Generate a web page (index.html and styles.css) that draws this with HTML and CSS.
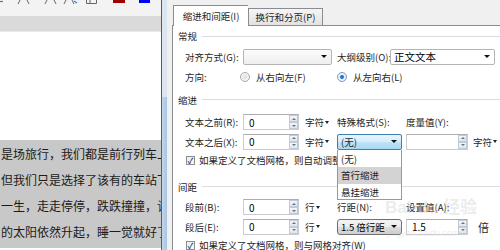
FILE: index.html
```html
<!DOCTYPE html>
<html lang="zh-CN">
<head>
    <meta charset="UTF-8">
    <title>段落 - 缩进和间距</title>
    <link rel="stylesheet" href="styles.css">
</head>
<body>
<div class="app">

    <div class="word">
        <div class="toolbar">
            <svg width="161" height="16" viewBox="0 0 161 16">
                <path d="M0 1.5h3" stroke="#3a7bd5" stroke-width="1.2"/>
                <path d="M20 0l-2 4M27 0l2 4" stroke="#666" stroke-width="1"/>
                <path d="M47 0l-2 4M54 0l2 4" stroke="#666" stroke-width="1"/>
                <path d="M66 0l-2 4M72 0l2 4" stroke="#666" stroke-width="1"/>
                <path d="M74 1l3 2" stroke="#3a7bd5" stroke-width="1.2"/>
                <path d="M86.5 0v3.5h10v-3.5M90 0v3.5" stroke="#666" stroke-width="1" fill="none"/>
                <rect x="113" y="0" width="12" height="3" fill="#a00000"/>
                <rect x="139" y="0" width="11" height="3" fill="#0000ff"/>
            </svg>
        </div>
        <div class="ruler"></div>
        <div class="doc">
            <div class="selection">
                <p>是场旅行，我们都是前行列车上</p>
                <p>但我们只是选择了该有的车站下</p>
                <p>一生，走走停停，跌跌撞撞，让</p>
                <p>的太阳依然升起，睡一觉就好了</p>
            </div>
        </div>
    </div>

    <div class="vscroll"><div class="thumb"></div></div>

    <div class="dialog">
        <div class="tabs">
            <div class="tab active">缩进和间距(I)</div>
            <div class="tab">换行和分页(P)</div>
        </div>

        <div class="page">
            <div class="group group-first"><span>常规</span></div>

            <div class="row row-21">
                <label class="lbl">对齐方式(G):</label>
                <div class="combo combo-align"><span></span><i class="arrow"></i></div>
                <label class="lbl lbl-outline">大纲级别(O):</label>
                <div class="combo combo-outline"><span>正文文本</span><i class="arrow"></i></div>
            </div>

            <div class="row">
                <label class="lbl">方向:</label>
                <div class="opt opt-first"><span class="radio"></span>从右向左(F)</div>
                <div class="opt"><span class="radio checked"></span>从左向右(L)</div>
            </div>

            <div class="group group-mid"><span>缩进</span></div>

            <div class="row">
                <label class="lbl">文本之前(R):</label>
                <div class="spin"><span>0</span><div class="spin-btns"><b class="up"></b><b class="down"></b></div></div>
                <div class="unit">字符<i class="caret"></i></div>
                <label class="lbl-col">特殊格式(S):</label>
                <label class="lbl-col">度量值(Y):</label>
            </div>

            <div class="row row-19">
                <label class="lbl">文本之后(X):</label>
                <div class="spin"><span>0</span><div class="spin-btns"><b class="up"></b><b class="down"></b></div></div>
                <div class="unit">字符<i class="caret"></i></div>
                <div class="combo combo-special open">
                    <span>(无)</span><i class="arrow"></i>
                    <ul class="dropdown">
                        <li>(无)</li>
                        <li class="hover">首行缩进</li>
                        <li>悬挂缩进</li>
                    </ul>
                </div>
                <div class="spin spin-wide"><span></span><div class="spin-btns"><b class="up"></b><b class="down"></b></div></div>
                <div class="unit unit-right">字符<i class="caret"></i></div>
            </div>

            <div class="row row-18">
                <div class="check"><span class="box">✓</span>如果定义了文档网格，则自动调整右缩进(D)</div>
            </div>

            <div class="group group-spacing"><span>间距</span></div>

            <div class="row">
                <label class="lbl">段前(B):</label>
                <div class="spin"><span>0</span><div class="spin-btns"><b class="up"></b><b class="down"></b></div></div>
                <div class="unit">行<i class="caret"></i></div>
                <label class="lbl-col">行距(N):</label>
                <label class="lbl-col">设置值(A):</label>
            </div>

            <div class="row row-19">
                <label class="lbl">段后(E):</label>
                <div class="spin"><span>0</span><div class="spin-btns"><b class="up"></b><b class="down"></b></div></div>
                <div class="unit">行<i class="caret"></i></div>
                <div class="combo combo-button"><span>1.5 倍行距</span><i class="arrow"></i></div>
                <div class="spin spin-wide"><span>1.5</span><div class="spin-btns"><b class="up"></b><b class="down"></b></div></div>
                <div class="unit unit-times">倍</div>
            </div>

            <div class="row row-18">
                <div class="check"><span class="box">✓</span>如果定义了文档网格，则与网格对齐(W)</div>
            </div>
        </div>

        <div class="watermark">
            <div class="wm-logo">Bai<span class="wm-paw">●</span>du 经验</div>
            <div class="wm-url">jingyan.baidu.com</div>
        </div>
    </div>

</div>
</body>
</html>
```

FILE: styles.css
```css
body {
    margin: 0;
    padding: 0;
    font-family: "Noto Sans CJK SC", "Liberation Sans", sans-serif;
    color: #1e1e1e;
    background: #fff;
}
.app {
    display: flex;
    width: 500px;
    height: 250px;
    overflow: hidden;
}

/* word document on the left */
.word {
    width: 161px;
    flex: none;
    overflow: hidden;
    background: #fff;
}
.toolbar {
    height: 16px;
    background: #f3f3f3;
}
.toolbar svg { display: block; }
.ruler {
    height: 15px;
    background: #dadada;
    border-bottom: 1px solid #e9e9e9;
}
.doc {
    height: 218px;
    padding-top: 108px;
    box-sizing: border-box;
}
.selection {
    height: 108px;
    background: #c8c8c8;
    padding-top: 1px;
    box-sizing: border-box;
    white-space: nowrap;
}
.selection p {
    margin: 0;
    padding-left: 1px;
    font-size: 12px;
    line-height: 26px;
    color: #1a1a1a;
}

.vscroll {
    width: 5px;
    flex: none;
    border-left: 1px solid #5c5c5c;
    background: #dde6ef;
    display: flex;
    flex-direction: column;
}
.thumb {
    margin-top: 97px;
    flex: 1;
    background: linear-gradient(90deg, #c3d6ec, #a9c4e4);
}

/* paragraph dialog */
.dialog {
    flex: 1;
    position: relative;
    background: #f0f0f0;
    overflow: hidden;
    font-size: 9.5px;
    white-space: nowrap;
}
.tabs {
    height: 25px;
    padding: 5px 0 0 6px;
    box-sizing: border-box;
    display: flex;
    align-items: flex-end;
}
.tab {
    width: 75px;
    height: 17px;
    box-sizing: border-box;
    border: 1px solid #898c95;
    border-bottom: none;
    background: linear-gradient(#f5f5f5, #e2e2e2);
    text-align: center;
    line-height: 16px;
    color: #1e1e1e;
}
.tab.active {
    width: 75px;
    height: 21px;
    margin-bottom: -1px;
    background: #fff;
    position: relative;
    z-index: 1;
    line-height: 20px;
    border-right: none;
}
.page {
    margin-left: 5px;
    width: 340px;
    height: 230px;
    border: 1px solid #898c95;
    background: #fff;
}

.group {
    display: flex;
    align-items: center;
    padding-left: 5px;
    padding-right: 4px;
}
.group::after {
    content: "";
    flex: 1;
    margin-left: 5px;
    border-top: 1px solid #d9dde2;
    margin-right: 8px;
}
.group-first { height: 20px; }
.group-mid { height: 25px; }
.group-spacing {
    height: 28px;
    align-items: flex-end;
}
.group-spacing span { line-height: 20px; }
.group-spacing::after { margin-bottom: 10px; }

.row {
    display: flex;
    align-items: center;
    height: 20px;
    padding-left: 12px;
}
.row-21 { height: 21px; }
.row-19 { height: 19px; }
.row-18 { height: 18px; }

.lbl {
    width: 58px;
    flex: none;
}
.lbl-outline { width: 53px; flex: none; }
.lbl-col {
    width: 69px;
    flex: none;
}

/* combo boxes */
.combo {
    height: 16px;
    box-sizing: border-box;
    border: 1px solid #b4b4b4;
    border-radius: 2px;
    background: #fff;
    display: flex;
    align-items: center;
    padding: 0 4px 0 3px;
    position: relative;
    flex: none;
}
.combo span {
    flex: 1;
    white-space: nowrap;
}
.arrow {
    width: 0;
    height: 0;
    border-left: 3px solid transparent;
    border-right: 3px solid transparent;
    border-top: 3px solid #111;
}
.combo-align {
    width: 89px;
    margin-right: 5px;
    background: linear-gradient(#fbfbfb, #efefef);
}
.combo-outline { width: 105px; }
.combo-outline span { font-size: 10.5px; color: #000; }
.combo-special {
    width: 65px;
    margin-right: 4px;
    border-color: #3c7fb1;
    background: linear-gradient(#e8f4fc 0%, #d6ecf9 50%, #bee3f7 51%, #a7d9f5 100%);
}
.combo-button {
    width: 65px;
    margin-right: 4px;
    border-color: #707070;
    border-radius: 3px;
    background: linear-gradient(#f4f4f4 0%, #ebebeb 50%, #dddddd 51%, #cfcfcf 100%);
}
.combo-button span { color: #000; }

.dropdown {
    position: absolute;
    top: 15px;
    left: -1px;
    width: 65px;
    height: 50px;
    margin: 0;
    padding: 1px 0 0;
    list-style: none;
    box-sizing: border-box;
    background: #fff;
    border: 1px solid #999;
    border-top: none;
    z-index: 5;
}
.dropdown li {
    height: 16px;
    line-height: 16px;
    padding-left: 3px;
}
.dropdown li.hover { background: #d3d3d3; height: 17px; line-height: 17px; }

/* spin boxes */
.spin {
    width: 56px;
    height: 16px;
    box-sizing: border-box;
    border: 1px solid #c9ccd2;
    border-top-color: #abadb3;
    background: #fff;
    display: flex;
    align-items: center;
    padding-left: 5px;
    flex: none;
}
.spin span {
    flex: 1;
    font-size: 10px;
    color: #000;
}
.spin-wide { width: 62px; }
.spin-btns {
    width: 9px;
    height: 14px;
    display: flex;
    flex-direction: column;
}
.spin-btns b {
    flex: 1;
    display: flex;
    align-items: center;
    justify-content: center;
    background: linear-gradient(#f4f6f9, #dfe5ec);
    border: 1px solid #c2cad4;
    box-sizing: border-box;
}
.spin-btns b::after {
    content: "";
    border-left: 2px solid transparent;
    border-right: 2px solid transparent;
}
.spin-btns .up::after { border-bottom: 2px solid #5b7395; }
.spin-btns .down::after { border-top: 2px solid #5b7395; }

.unit {
    width: 32px;
    margin-left: 6px;
    flex: none;
    display: flex;
    align-items: center;
    white-space: nowrap;
}
.unit-right { margin-left: 5px; }
.unit-times { margin-left: 10px; font-size: 11px; }
.caret {
    margin-left: 1px;
    border-left: 2px solid transparent;
    border-right: 2px solid transparent;
    border-top: 3px solid #222;
}

/* radio buttons */
.opt {
    display: flex;
    align-items: center;
    flex: none;
}
.opt-first {
    width: 97px;
    margin-left: -3px;
}
.radio {
    width: 10px;
    height: 10px;
    box-sizing: border-box;
    border-radius: 50%;
    border: 1px solid #a2a8b0;
    background: radial-gradient(circle, #e6e6e6 30%, #f8f8f8 70%);
    margin-right: 6px;
}
.radio.checked {
    background: radial-gradient(circle, #1f6fb8 0, #2d86d3 28%, #e6eef6 42%, #f7f7f7 100%);
    border-color: #7a9cc1;
}

/* check boxes */
.check {
    display: flex;
    align-items: center;
    white-space: nowrap;
}
.box {
    width: 9px;
    height: 9px;
    box-sizing: border-box;
    border: 1px solid #8e8f8f;
    background: linear-gradient(#e8ecf1, #fbfbfb);
    margin: 0 4px 0 1px;
    font-size: 8px;
    line-height: 7px;
    text-align: center;
    color: #2a4f87;
    font-weight: bold;
}

/* baidu watermark */
.watermark {
    position: absolute;
    left: 218px;
    top: 197px;
    color: rgba(200, 200, 200, 0.35);
    pointer-events: none;
    z-index: 6;
}
.wm-logo {
    font-family: "Liberation Sans", "Noto Sans CJK SC", sans-serif;
    font-size: 17px;
    font-weight: bold;
    line-height: 20px;
}
.wm-paw { font-size: 10px; vertical-align: 3px; }
.wm-url {
    font-family: "Liberation Sans", sans-serif;
    font-size: 9px;
    margin-top: 10px;
    margin-left: 2px;
}
```
